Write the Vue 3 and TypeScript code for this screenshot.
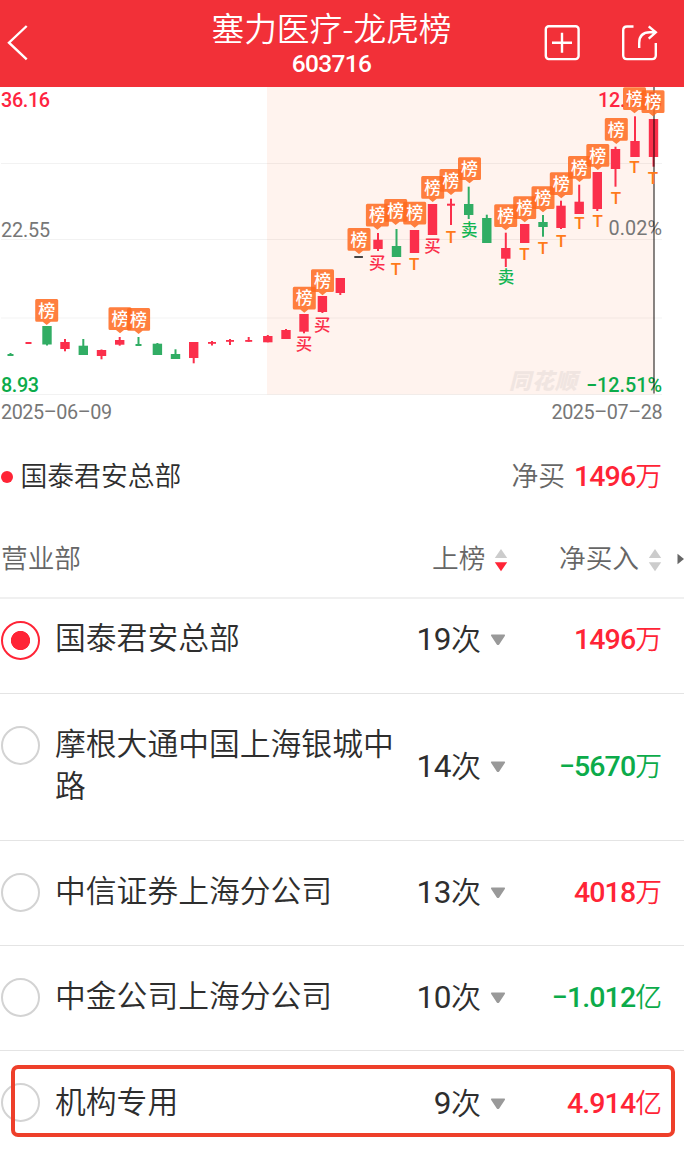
<script setup lang="ts">
type Tone = 'up' | 'down' | 'flat'

interface Candle {
  x: number
  top: number
  bottom: number
  tone: Tone
  width?: number
  high?: number
  low?: number
}

interface Seat {
  name: string
  count: string
  value: string
  unit: string
  tone: Tone
  selected?: boolean
  kind?: string
}

const candles: Candle[] = [
  { x: 10.5, top: 354, bottom: 356, tone: 'down', width: 6, high: 353 },
  { x: 28.5, top: 342, bottom: 344, tone: 'up', width: 6 },
  { x: 47, top: 326, bottom: 344.5, tone: 'down', low: 345.5 },
  { x: 65, top: 342, bottom: 349, tone: 'up', high: 339, low: 351.3 },
  { x: 83.3, top: 345.7, bottom: 355, tone: 'down', high: 339 },
  { x: 101.5, top: 350, bottom: 356, tone: 'up', high: 349.5, low: 359.3 },
  { x: 119.7, top: 340, bottom: 344.7, tone: 'up', high: 337, low: 345.7 },
  { x: 138.5, top: 344, bottom: 346, tone: 'down', width: 6, high: 337 },
  { x: 157.4, top: 343.7, bottom: 355, tone: 'down', high: 343 },
  { x: 175.5, top: 354, bottom: 359, tone: 'down', high: 349.3 },
  { x: 193.7, top: 342, bottom: 358, tone: 'up', low: 363.3 },
  { x: 212, top: 342, bottom: 343.8, tone: 'up', width: 8, high: 341, low: 345.5 },
  { x: 230, top: 340, bottom: 341.8, tone: 'up', width: 8, high: 339, low: 345 },
  { x: 248.7, top: 340, bottom: 341.8, tone: 'up', width: 7, high: 337 },
  { x: 267.8, top: 336, bottom: 342.3, tone: 'up', high: 335 },
  { x: 286, top: 330, bottom: 339, tone: 'up', high: 329 },
  { x: 304, top: 314, bottom: 331.7, tone: 'up', low: 333.3 },
  { x: 322.4, top: 296, bottom: 312, tone: 'up', low: 313 },
  { x: 340.3, top: 278, bottom: 293, tone: 'up', low: 295 },
  { x: 358.6, top: 256, bottom: 258, tone: 'flat', width: 8.6 },
  { x: 378, top: 239.7, bottom: 249, tone: 'up', high: 233, low: 251 },
  { x: 396.5, top: 246, bottom: 257, tone: 'down', high: 229 },
  { x: 414.5, top: 230, bottom: 253, tone: 'up' },
  { x: 432.5, top: 204, bottom: 235, tone: 'up' },
  { x: 451, top: 203.7, bottom: 205.7, tone: 'up', width: 8, high: 198.7, low: 225 },
  { x: 468.7, top: 204, bottom: 215, tone: 'down', high: 186.7, low: 219 },
  { x: 486.8, top: 218, bottom: 243, tone: 'down', high: 214.7 },
  { x: 505.8, top: 248, bottom: 258.7, tone: 'up', high: 232.7, low: 267 },
  { x: 524.7, top: 224, bottom: 243, tone: 'up' },
  { x: 543, top: 222, bottom: 227, tone: 'down', high: 215, low: 236.7 },
  { x: 561, top: 205.7, bottom: 228, tone: 'up', high: 200.7, low: 229 },
  { x: 579.2, top: 201.7, bottom: 214, tone: 'up', high: 184.7 },
  { x: 597.3, top: 172, bottom: 209, tone: 'up', low: 211 },
  { x: 615.5, top: 149, bottom: 169, tone: 'up', high: 146.7, low: 186.7 },
  { x: 635, top: 141, bottom: 157, tone: 'up', high: 116.3 },
  { x: 653.5, top: 119, bottom: 157, tone: 'up', low: 166.7 },
]

const badges: [number, number][] = [
  [46.7, 299], [120, 307.3], [138.6, 308], [304.3, 286.7], [322.5, 269.3],
  [359, 228], [377.4, 203.7], [395.7, 199], [414.7, 201.7], [432.7, 176],
  [451, 169], [469.5, 157.3], [505.7, 204.3], [524.7, 196.3], [543, 186.3],
  [561.3, 172.3], [579.5, 156], [597.8, 144], [616.3, 118], [634.5, 87.3], [653, 90.3],
]

const trades: { x: number; y: number; label: string; tone: Tone }[] = [
  { x: 304, y: 344.3, label: '买', tone: 'up' },
  { x: 322.3, y: 325, label: '买', tone: 'up' },
  { x: 377.3, y: 263, label: '买', tone: 'up' },
  { x: 432.6, y: 246, label: '买', tone: 'up' },
  { x: 469.3, y: 229.8, label: '卖', tone: 'down' },
  { x: 506, y: 277.4, label: '卖', tone: 'down' },
]

const tMarks: [number, number][] = [
  [396, 262.3], [414.3, 257.3], [451, 230.3], [524.5, 247.3], [543, 242], [561.3, 234.7],
  [579.5, 217], [597.8, 215], [616, 191.3], [634.5, 160.7], [653, 171.3],
]

const gridLines = [163.5, 239.5, 318, 394.5]

const seats: Seat[] = [
  { name: '国泰君安总部', count: '19', value: '1496', unit: '万', tone: 'up', selected: true, kind: 'first' },
  { name: '摩根大通中国上海银城中路', count: '14', value: '−5670', unit: '万', tone: 'down' },
  { name: '中信证券上海分公司', count: '13', value: '4018', unit: '万', tone: 'up' },
  { name: '中金公司上海分公司', count: '10', value: '−1.012', unit: '亿', tone: 'down' },
  { name: '机构专用', count: '9', value: '4.914', unit: '亿', tone: 'up', kind: 'last' },
]
</script>

<template>
  <div class="page">
    <header class="bar">
      <svg class="back" width="36" height="40" viewBox="0 22 36 40">
        <polyline points="26.7,26 9,42.7 26.7,59.3" />
      </svg>
      <div class="heading">
        <h1>塞力医疗-龙虎榜</h1>
        <div class="code">603716</div>
      </div>
      <svg class="actions" width="124" height="40" viewBox="540 22 124 40">
        <rect x="545.8" y="26.3" width="32.8" height="32.8" rx="3" />
        <path d="M552 42.7H572M562 32.7V52.7" />
        <path d="M633.5 26.5H627Q623.2 26.5 623.2 30.3V55.3Q623.2 59.1 627 59.1H652Q655.8 59.1 655.8 55.3V43" />
        <path d="M639.2 48V43Q639.2 32.3 650 32.3H655.5M648.7 26.3L655.8 32.3L648.7 38.7" />
      </svg>
    </header>

    <svg class="chart" width="684" height="342" viewBox="0 87 684 342">
      <rect class="zone" x="267" y="87" width="387.5" height="307.5" />
      <line v-for="y in gridLines" :key="y" class="grid" x1="1" :y1="y" x2="662" :y2="y" />
      <text class="watermark" x="509" y="388.5" textLength="68">同花顺</text>

      <text class="axis up" x="1" y="106.5" textLength="49">36.16</text>
      <text class="axis muted" x="1" y="236.5" textLength="49">22.55</text>
      <text class="axis down" x="1" y="391.5" textLength="38">8.93</text>
      <text class="axis up" x="598" y="106.5" textLength="64">12.51%</text>
      <text class="axis muted" x="608.5" y="235" textLength="53.5">0.02%</text>
      <text class="axis down" x="586" y="391.5" textLength="76">−12.51%</text>
      <text class="axis muted" x="1" y="418.5" textLength="111">2025–06–09</text>
      <text class="axis muted" x="551.5" y="418.5" textLength="111">2025–07–28</text>

      <g v-for="c in candles" :key="c.x" :class="c.tone">
        <rect :x="c.x - 1" :y="c.high ?? c.top" width="2" :height="(c.low ?? c.bottom) - (c.high ?? c.top)" />
        <rect :x="c.x - (c.width ?? 9.4) / 2" :y="c.top" :width="c.width ?? 9.4" :height="c.bottom - c.top" />
      </g>
      <line class="cursor" x1="654" y1="87" x2="654" y2="393.5" />

      <g v-for="[x, y] in badges" :key="x" :transform="`translate(${x} ${y})`">
        <path class="badge" d="M-10 0H10Q11.5 0 11.5 1.5V21.3Q11.5 22.8 10 22.8H4L0 26L-4 22.8H-10Q-11.5 22.8 -11.5 21.3V1.5Q-11.5 0 -10 0Z" />
        <text class="badge-text" x="0" y="17.5">榜</text>
      </g>
      <text v-for="t in trades" :key="t.x" class="trade" :class="t.tone" :x="t.x" :y="t.y + 6">{{ t.label }}</text>
      <text v-for="[x, y] in tMarks" :key="x" class="t-mark" :x="x" :y="y + 12.2">T</text>
    </svg>

    <section class="summary">
      <i class="dot"></i>
      <span class="seat-name">国泰君安总部</span>
      <span class="net-label">净买</span>
      <span class="amount up"><b>1496</b>万</span>
    </section>

    <div class="columns">
      <span class="col-name">营业部</span>
      <span class="col-count">上榜</span>
      <svg class="sorter" width="14" height="24" viewBox="0 0 14 24">
        <path d="M7 1L13.2 10H.8Z" /><path class="active" d="M7 23.3L13.2 14.3H.8Z" />
      </svg>
      <span class="col-net">净买入</span>
      <svg class="sorter" width="14" height="24" viewBox="0 0 14 24">
        <path d="M7 1L13.2 10H.8Z" /><path d="M7 23.3L13.2 14.3H.8Z" />
      </svg>
      <svg class="more" width="7" height="12" viewBox="0 0 7 12"><path d="M.5 .7L7 6L.5 11.3Z" /></svg>
    </div>

    <div class="list">
      <div v-for="s in seats" :key="s.name" class="row" :class="s.kind">
        <i class="radio" :class="{ on: s.selected }"></i>
        <span class="name">{{ s.name }}</span>
        <span class="count"><b>{{ s.count }}</b>次</span>
        <svg class="caret" width="16" height="12" viewBox="0 0 16 12">
          <path d="M1.6 .6H14.4Q15.6 .8 14.8 2L9.2 10.4Q8 11.8 6.8 10.4L1.2 2Q.4 .8 1.6 .6Z" />
        </svg>
        <span class="amount" :class="s.tone"><b>{{ s.value }}</b>{{ s.unit }}</span>
        <div v-if="s.kind === 'last'" class="frame"></div>
      </div>
    </div>
  </div>
</template>

<style>
body {
  background: #fff;
}
</style>

<style scoped>
.page {
  width: 684px;
  height: 1150px;
  overflow: hidden;
  background: #fff;
  color: #2e2e2e;
  font-family: Roboto, "Noto Sans CJK SC", sans-serif;
}
.bar {
  display: flex;
  align-items: flex-start;
  height: 87px;
  background: #f23038;
  color: #fff;
}
.bar svg {
  margin-top: 22px;
  fill: none;
  stroke: #fff;
  stroke-width: 2.4;
  flex: none;
}
.heading {
  width: 591px;
  margin-right: -87px;
  text-align: center;
}
h1 {
  margin: 4px 0 0;
  font: 350 32.7px/46px "Noto Sans CJK SC", sans-serif;
}
.code {
  margin-top: 1px;
  font-weight: 500;
  font-size: 24.5px;
  line-height: 26px;
  letter-spacing: -0.7px;
}
.chart {
  display: block;
}
.zone {
  fill: #fff3ee;
}
.grid {
  stroke: #000;
  stroke-opacity: 0.05;
  stroke-width: 1.2;
}
.watermark {
  font: italic 900 22px "Noto Sans CJK SC", sans-serif;
  fill: #f0e5e1;
}
.axis {
  font-size: 19.8px;
}
.chart .up {
  fill: #fb2f4b;
}
.chart .down {
  fill: #31ad64;
}
.chart .flat {
  fill: #444;
}
.chart .axis.up {
  fill: #ff2441;
  font-weight: 500;
}
.chart .axis.down {
  fill: #0cab4a;
  font-weight: 500;
}
.muted {
  fill: #777;
}
.cursor {
  stroke: #000;
  stroke-opacity: 0.52;
  stroke-width: 1.8;
}
.badge {
  fill: #ff6a1f;
  fill-opacity: 0.86;
}
.badge-text {
  font: 500 17px "Noto Sans CJK SC", sans-serif;
  fill: #fff;
  text-anchor: middle;
}
.trade {
  font: 500 16.5px "Noto Sans CJK SC", sans-serif;
  text-anchor: middle;
}
.chart .trade.down {
  fill: #12b552;
}
.t-mark {
  font-size: 17px;
  font-weight: 500;
  fill: #ff7a1a;
  text-anchor: middle;
}
.summary {
  display: flex;
  align-items: center;
  height: 94px;
  padding: 0 22px 0 1px;
  font-size: 26.8px;
}
.dot {
  width: 12px;
  height: 12px;
  margin: 1px 7.5px 0 0;
  border-radius: 50%;
  background: #ff2436;
}
.seat-name {
  flex: 1;
  margin-top: -3px;
  font-weight: 350;
}
.net-label {
  margin: -3px 9px 0 0;
  color: #666;
  font-weight: 350;
}
.summary .amount {
  margin-top: 2px;
}
.columns {
  display: flex;
  align-items: center;
  height: 74px;
  border-bottom: 2px solid #f0f0f0;
  color: #666;
  font-size: 26.7px;
  font-weight: 350;
}
.columns span {
  margin-top: -7px;
}
.col-name {
  width: 431px;
  padding-left: 1px;
}
.col-count {
  width: 62px;
}
.columns .col-net {
  width: 89px;
  margin-left: 51px;
}
.sorter {
  margin-top: -1px;
  fill: #ccc;
  flex: none;
}
.active {
  fill: #ff2436;
}
.more {
  margin: -2px 0 0 auto;
  fill: #666;
  flex: none;
}
.row {
  position: relative;
  display: flex;
  align-items: center;
  box-sizing: border-box;
  min-height: 105px;
  padding: 31px 22px 31px 1px;
  border-bottom: 1px solid #e4e4e4;
}
.row.first {
  min-height: 95px;
  padding: 20px 22px 32px 1px;
}
.row.last {
  border-bottom: 0;
}
.radio {
  align-self: flex-start;
  flex: none;
  box-sizing: border-box;
  width: 39px;
  height: 39px;
  margin-top: 1px;
  border: 2.5px solid #d3d3d3;
  border-radius: 50%;
}
.radio.on {
  margin-top: 2px;
  border-color: #ff2436;
  background: radial-gradient(circle, #ff2436 9.2px, transparent 10px);
}
.name {
  width: 340px;
  margin: -1px 0 1px 15px;
  font-size: 30.8px;
  font-weight: 350;
  line-height: 42px;
}
.count {
  width: 86px;
  text-align: right;
  font-size: 30px;
  font-weight: 350;
  line-height: 42px;
}
.count b {
  font-weight: 400;
  font-size: 31.5px;
  letter-spacing: -0.4px;
}
.caret {
  margin-left: 9px;
  fill: #999;
  flex: none;
}
.amount {
  font-size: 26.8px;
  font-weight: 350;
  line-height: 42px;
}
.row .amount {
  margin-left: auto;
}
.amount b {
  font-weight: 500;
  font-size: 28.5px;
  letter-spacing: -0.9px;
}
.amount.up {
  color: #ff2436;
}
.amount.down {
  color: #0cab4a;
}
.frame {
  position: absolute;
  left: 11px;
  top: 14px;
  box-sizing: border-box;
  width: 664px;
  height: 72px;
  border: 4px solid #ee3f2a;
  border-radius: 7px;
}
</style>
